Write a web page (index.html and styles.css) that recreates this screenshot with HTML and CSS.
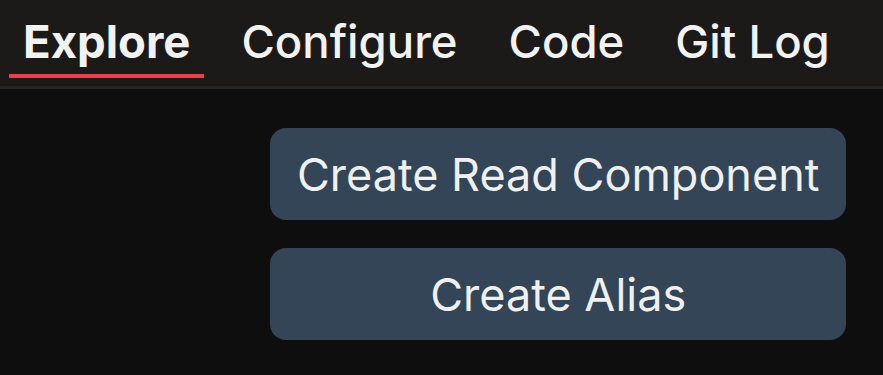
FILE: index.html
```html
<!DOCTYPE html>
<html>
  <head>
    <link rel="stylesheet" href="styles.css">
  </head>

  <body>
    <div class="app">
      <div class="tabs">
        <div class="tab active">Explore</div>
        <div class="tab">Configure</div>
        <div class="tab">Code</div>
        <div class="tab">Git Log</div>
      </div>

      <div class="main">
        <div class="actions">
          <button>Create Read Component</button>
          <button>Create Alias</button>
        </div>
      </div>
    </div>
  </body>
</html>
```

FILE: styles.css
```css
body {
  font-family: Inter, "Noto Sans", sans-serif;
  background-color: #0f0e0f;
  color: #f2f2f2;
  margin: 0;
  padding: 0;
  overflow: hidden;
}

.tabs {
  display: flex;
  gap: 23px;
  height: 86px;
  padding-left: 9px;
  background-color: #1b1a19;
  border-bottom: 3px solid #252526;
  box-sizing: content-box;
}

.tab {
  padding: 0 14px;
  font-size: 45.5px;
  font-weight: 500;
  line-height: 84px;
  height: 78px;
  box-sizing: border-box;
  border-bottom: 4px solid transparent;
}

.tab.active {
  font-weight: 700;
  border-bottom-color: #e8414b;
}

.main {
  display: flex;
  justify-content: flex-end;
  padding: 39px 37px 0 0;
}

.actions {
  display: flex;
  flex-direction: column;
  gap: 28px;
}

button {
  font-family: inherit;
  font-size: 45px;
  color: #eef0f2;
  background-color: #334556;
  border: none;
  border-radius: 16px;
  padding: 0 26.5px;
  height: 92px;
  cursor: pointer;
}
```
